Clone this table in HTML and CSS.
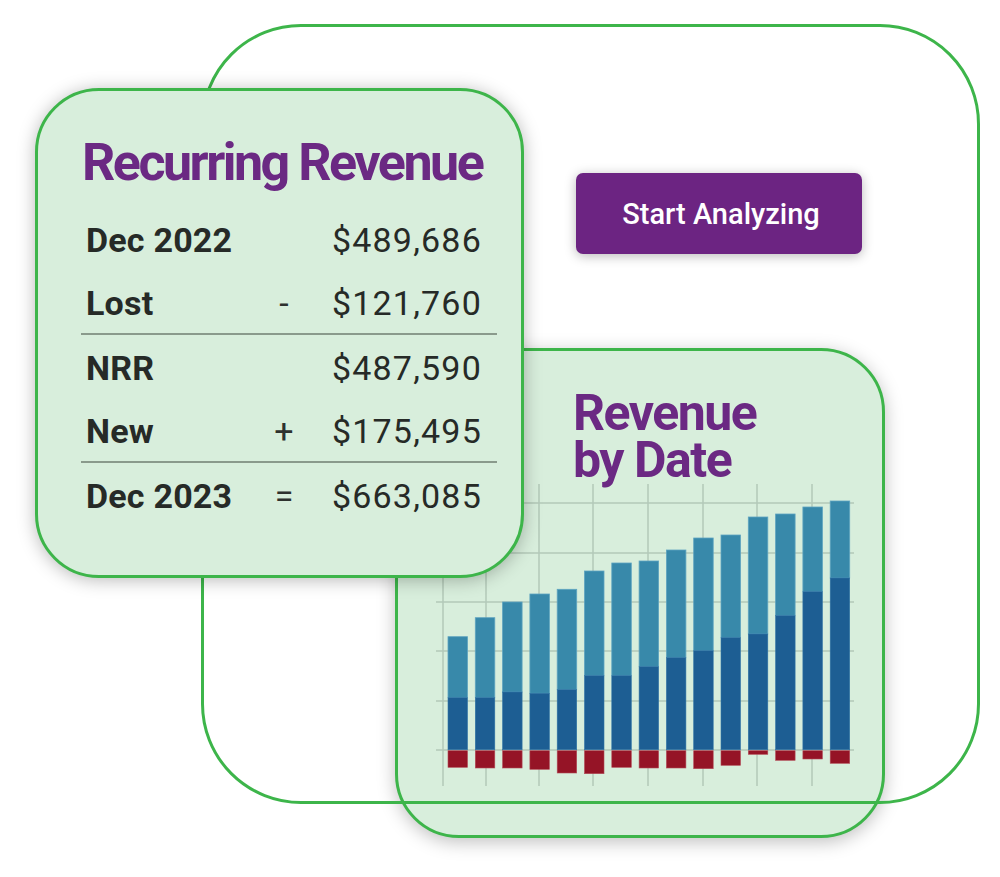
FILE: index.html
```html
<!DOCTYPE html>
<html lang="en">
<head>
<meta charset="utf-8">
<title>Recurring Revenue</title>
<link rel="stylesheet" href="styles.css">
</head>
<body>
<div class="stage">
  <section class="card chart-card">
    <h2 class="chart-title"><span class="chart-line">Revenue</span><span class="chart-line">by Date</span></h2>
    <svg class="chart" width="420" height="303" viewBox="0 0 420 303" aria-label="Revenue by date chart">
      <g class="grid">
        <line x1="0" y1="19" x2="418" y2="19"/>
        <line x1="0" y1="69" x2="418" y2="69"/>
        <line x1="0" y1="118" x2="418" y2="118"/>
        <line x1="0" y1="167" x2="418" y2="167"/>
        <line x1="0" y1="217" x2="418" y2="217"/>
        <line x1="0" y1="266" x2="418" y2="266"/>
        <line x1="7" y1="0" x2="7" y2="302"/>
        <line x1="50" y1="0" x2="50" y2="302"/>
        <line x1="103" y1="0" x2="103" y2="302"/>
        <line x1="157" y1="0" x2="157" y2="302"/>
        <line x1="212" y1="0" x2="212" y2="302"/>
        <line x1="267" y1="0" x2="267" y2="302"/>
        <line x1="321" y1="0" x2="321" y2="302"/>
        <line x1="376" y1="0" x2="376" y2="302"/>
      </g>
      <g class="bars-light">
        <rect x="12" y="152.7" width="19.5" height="61"/>
        <rect x="39.3" y="133.7" width="19.5" height="80"/>
        <rect x="66.6" y="118" width="19.5" height="90"/>
        <rect x="93.9" y="110" width="19.5" height="99.3"/>
        <rect x="121.2" y="105.3" width="19.5" height="100.4"/>
        <rect x="148.5" y="87" width="19.5" height="104.7"/>
        <rect x="175.8" y="79" width="19.5" height="112.7"/>
        <rect x="203.1" y="77" width="19.5" height="105.7"/>
        <rect x="230.4" y="66" width="19.5" height="107.7"/>
        <rect x="257.7" y="54" width="19.5" height="112.7"/>
        <rect x="285" y="51" width="19.5" height="102.7"/>
        <rect x="312.3" y="33" width="19.5" height="117"/>
        <rect x="339.6" y="30" width="19.5" height="101.7"/>
        <rect x="366.9" y="23" width="19.5" height="84.7"/>
        <rect x="394.2" y="17" width="19.5" height="77"/>
      </g>
      <g class="bars-dark">
        <rect x="12" y="213.7" width="19.5" height="52"/>
        <rect x="39.3" y="213.7" width="19.5" height="52"/>
        <rect x="66.6" y="208" width="19.5" height="57.7"/>
        <rect x="93.9" y="209.3" width="19.5" height="56.4"/>
        <rect x="121.2" y="205.7" width="19.5" height="60"/>
        <rect x="148.5" y="191.7" width="19.5" height="74"/>
        <rect x="175.8" y="191.7" width="19.5" height="74"/>
        <rect x="203.1" y="182.7" width="19.5" height="83"/>
        <rect x="230.4" y="173.7" width="19.5" height="92"/>
        <rect x="257.7" y="166.7" width="19.5" height="99"/>
        <rect x="285" y="153.7" width="19.5" height="112"/>
        <rect x="312.3" y="150" width="19.5" height="115.7"/>
        <rect x="339.6" y="131.7" width="19.5" height="134"/>
        <rect x="366.9" y="107.7" width="19.5" height="158"/>
        <rect x="394.2" y="94" width="19.5" height="171.7"/>
      </g>
      <g class="bars-red">
        <rect x="12" y="266.7" width="19.5" height="16.6"/>
        <rect x="39.3" y="266.7" width="19.5" height="17.3"/>
        <rect x="66.6" y="266.7" width="19.5" height="17.3"/>
        <rect x="93.9" y="266.7" width="19.5" height="18.6"/>
        <rect x="121.2" y="266.7" width="19.5" height="22.3"/>
        <rect x="148.5" y="266.7" width="19.5" height="23"/>
        <rect x="175.8" y="266.7" width="19.5" height="16.6"/>
        <rect x="203.1" y="266.7" width="19.5" height="17.3"/>
        <rect x="230.4" y="266.7" width="19.5" height="17.3"/>
        <rect x="257.7" y="266.7" width="19.5" height="18"/>
        <rect x="285" y="266.7" width="19.5" height="14.6"/>
        <rect x="312.3" y="266.7" width="19.5" height="3.6"/>
        <rect x="339.6" y="266.7" width="19.5" height="9.6"/>
        <rect x="366.9" y="266.7" width="19.5" height="8.3"/>
        <rect x="394.2" y="266.7" width="19.5" height="12.6"/>
      </g>
    </svg>
  </section>

  <div class="frame"></div>

  <a class="cta" href="#">Start Analyzing</a>

  <section class="card rr-card">
    <h1 class="rr-title">Recurring Revenue</h1>
    <div class="rr-table">
      <div class="rr-row"><span class="rr-label">Dec 2022</span><span class="rr-op"></span><span class="rr-val">$489,686</span></div>
      <div class="rr-row"><span class="rr-label">Lost</span><span class="rr-op">-</span><span class="rr-val">$121,760</span></div>
      <hr class="rr-sep">
      <div class="rr-row"><span class="rr-label">NRR</span><span class="rr-op"></span><span class="rr-val">$487,590</span></div>
      <div class="rr-row"><span class="rr-label">New</span><span class="rr-op">+</span><span class="rr-val">$175,495</span></div>
      <hr class="rr-sep">
      <div class="rr-row"><span class="rr-label">Dec 2023</span><span class="rr-op">=</span><span class="rr-val">$663,085</span></div>
    </div>
  </section>
</div>
</body>
</html>
```

FILE: styles.css
```css
* { box-sizing: border-box; }

html, body {
  margin: 0;
  padding: 0;
  background: #ffffff;
}

body {
  font-family: Roboto, "Open Sans", "Liberation Sans", sans-serif;
  color: #262a27;
}

.stage {
  position: relative;
  width: 1000px;
  height: 877px;
  overflow: hidden;
}

.card {
  position: absolute;
  background: #d8eedc;
  border: 3px solid #3db54a;
  border-radius: 64px;
}

/* Outline frame behind the cards */
.frame {
  position: absolute;
  left: 201px;
  top: 24px;
  width: 779px;
  height: 780px;
  border: 3px solid #3db54a;
  border-radius: 100px;
  pointer-events: none;
}

/* Recurring revenue card */
.rr-card {
  left: 35px;
  top: 88px;
  width: 489px;
  height: 490px;
  padding: 46px 24px 0 43px;
  box-shadow: 0 2px 18px rgba(0, 0, 0, 0.28);
}

.rr-title {
  margin: 0 0 20px;
  padding-left: 1px;
  font-size: 52px;
  line-height: 52px;
  font-weight: 700;
  letter-spacing: -2.5px;
  color: #6b2983;
  white-space: nowrap;
}

.rr-row {
  display: grid;
  grid-template-columns: 1fr 30px 183px;
  padding: 0 15px 0 5px;
  font-size: 34px;
  line-height: 63px;
  height: 63px;
}

.rr-label {
  font-weight: 700;
  color: #262a27;
  letter-spacing: 0.2px;
}

.rr-op {
  text-align: center;
  color: #2d312e;
}

.rr-val {
  text-align: right;
  color: #262a27;
  letter-spacing: 1.2px;
  white-space: nowrap;
}

.rr-sep {
  margin: -2px 0 2px;
  height: 2px;
  border: 0;
  background: #8a9a8c;
}

/* Chart card */
.chart-card {
  left: 395px;
  top: 348px;
  width: 490px;
  height: 490px;
  padding: 39px 0 0 38px;
  box-shadow: 0 4px 18px rgba(0, 0, 0, 0.25);
}

.chart-title {
  margin: 0 0 0 137px;
  font-size: 50px;
  font-weight: 700;
  letter-spacing: -1.5px;
  color: #6b2983;
}

.chart-line {
  display: block;
  height: 47px;
  line-height: 47px;
}

.chart {
  display: block;
}

.grid line {
  stroke: #b3c8b8;
  stroke-width: 1.5;
}

.bars-light rect {
  fill: #3889aa;
  stroke: #5ea4c0;
  stroke-width: 0.8;
}

.bars-dark rect {
  fill: #1d5e93;
  stroke: #2f73a5;
  stroke-width: 0.6;
}

.bars-red rect {
  fill: #951426;
  stroke: #b24a58;
  stroke-width: 0.6;
}

/* Call to action */
.cta {
  position: absolute;
  left: 576px;
  top: 173px;
  width: 286px;
  height: 81px;
  display: flex;
  align-items: center;
  justify-content: center;
  background: #6c2482;
  border-radius: 7px;
  color: #ffffff;
  font-size: 29px;
  font-weight: 500;
  text-decoration: none;
  box-shadow: 0 2px 12px rgba(0, 0, 0, 0.28);
  padding-left: 4px;
}
```
